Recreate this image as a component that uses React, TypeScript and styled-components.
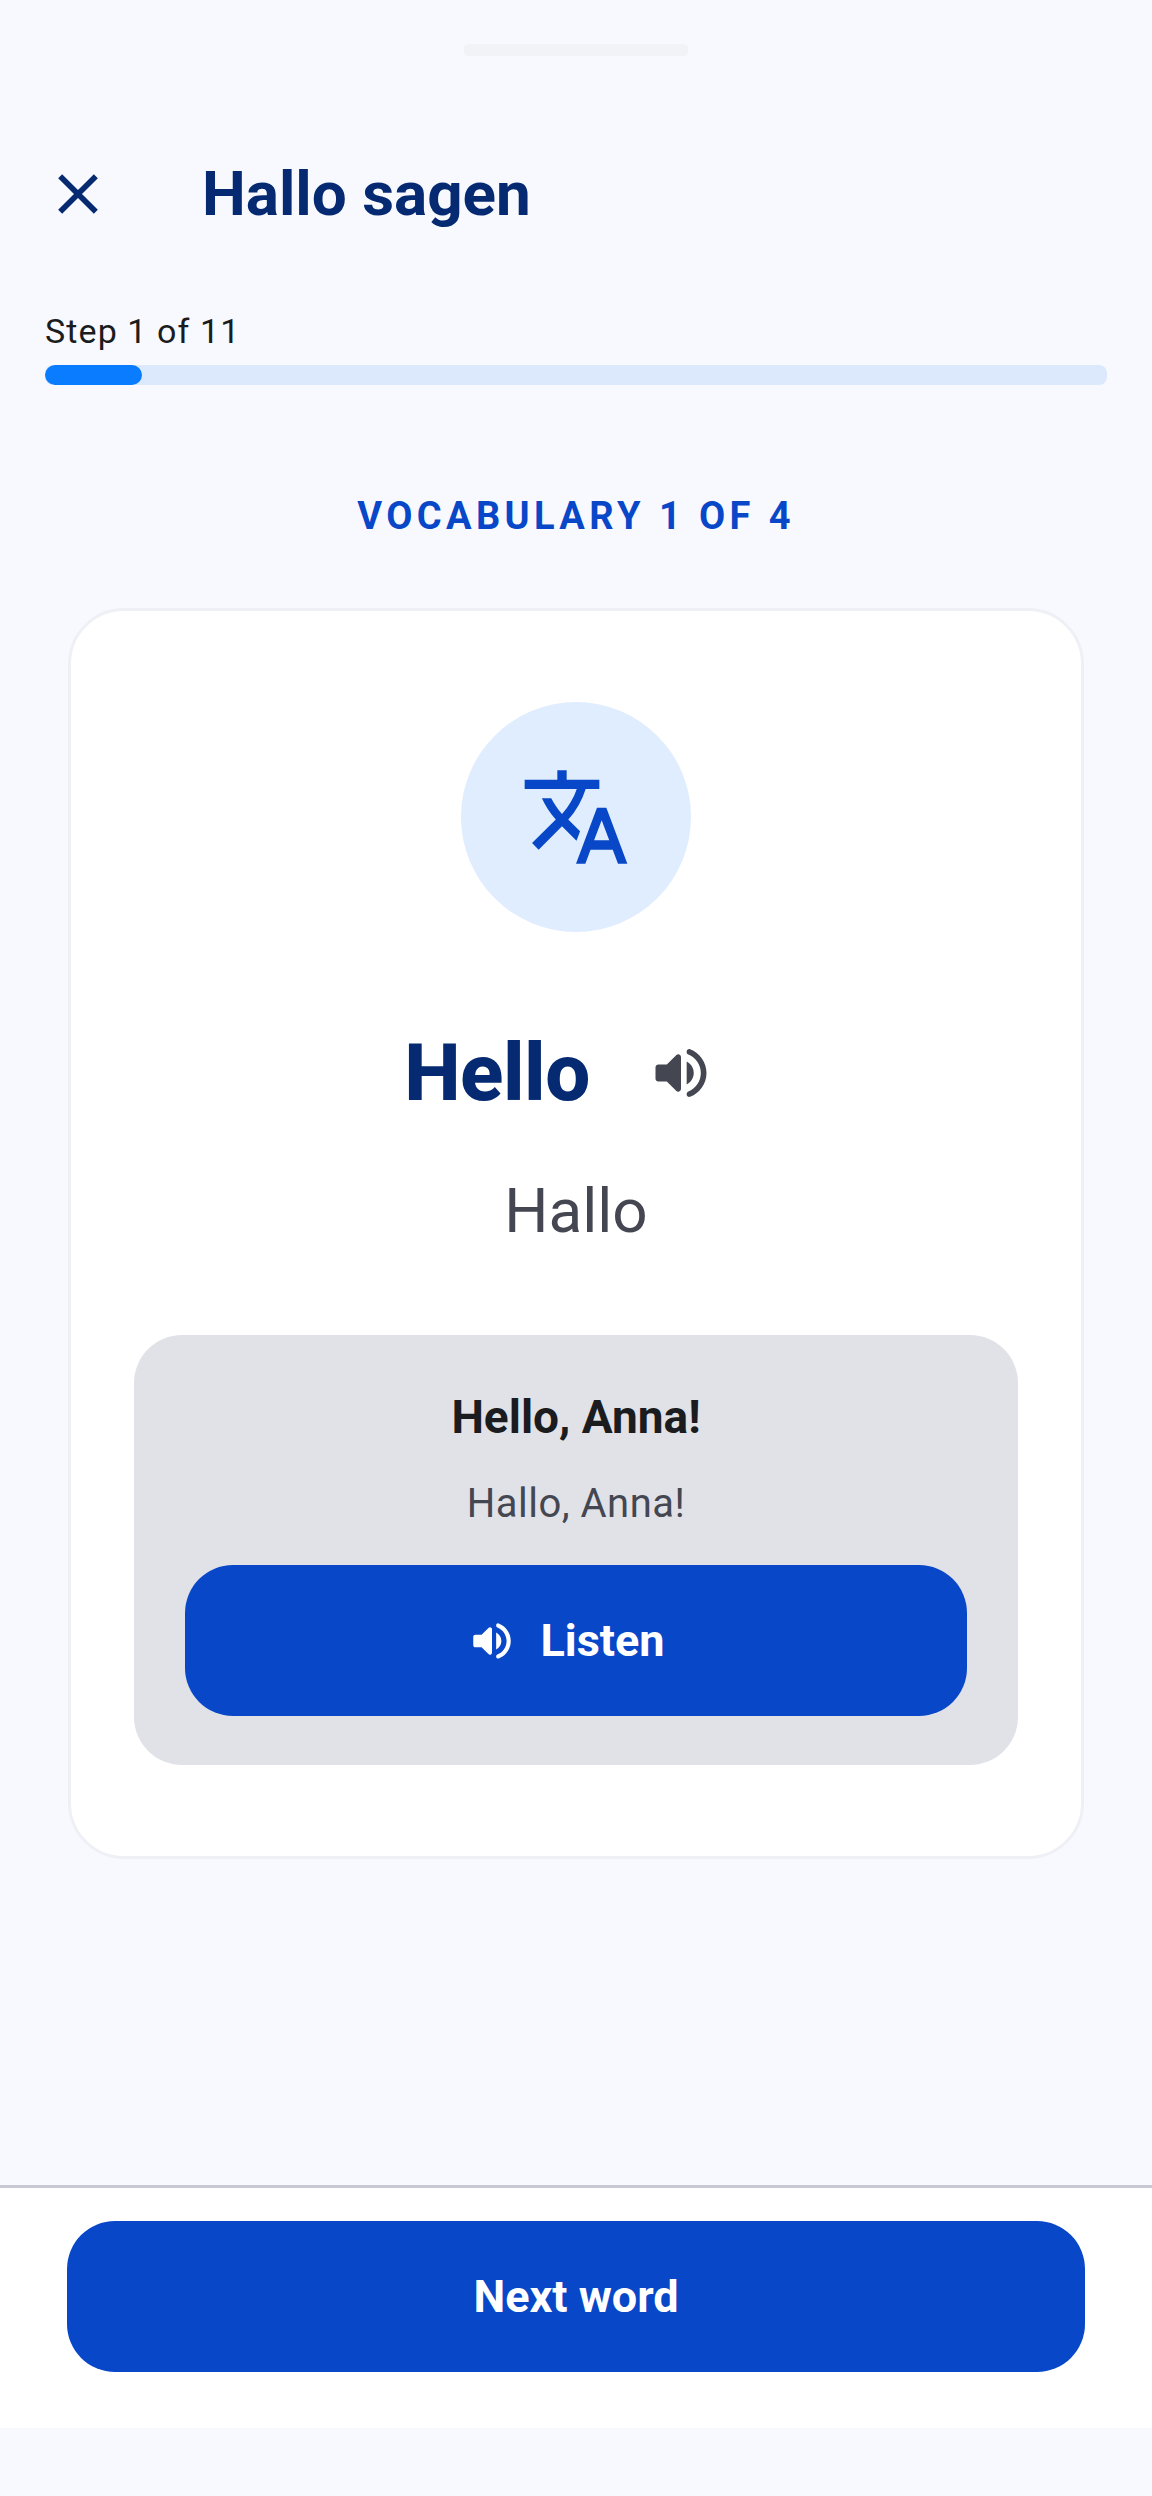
import React from "react";
import styled, { createGlobalStyle } from "styled-components";
import { MdClose, MdTranslate } from "react-icons/md";

const GlobalStyle = createGlobalStyle`
	html, body {
		margin: 0;
		padding: 0;
		background: #f8f9fe;
	}
	* {
		box-sizing: border-box;
	}
`;

const Screen = styled.div`
	width: 1152px;
	height: 2496px;
	display: flex;
	flex-direction: column;
	background: #f8f9fe;
	font-family: Roboto, "Liberation Sans", sans-serif;
	overflow: hidden;
`;

const Handle = styled.div`
	width: 224px;
	height: 12px;
	margin: 44px auto 0;
	background: #f2f3f6;
	border-radius: 4px;
`;

const Header = styled.header`
	display: flex;
	align-items: center;
	height: 96px;
	margin-top: 90px;
	padding-left: 44px;
	color: #062a72;
	svg {
		display: block;
	}
`;

const Title = styled.h1`
	margin: 0 0 0 90px;
	font-size: 62px;
	line-height: 96px;
	font-weight: 700;
	color: #062a72;
`;

const Progress = styled.section`
	margin-top: 67px;
	padding: 0 45px;
`;

const StepLabel = styled.div`
	font-size: 34px;
	line-height: 44px;
	letter-spacing: 1.1px;
	color: #1a1c20;
`;

const Track = styled.div`
	height: 20px;
	margin-top: 12px;
	background: #dce9fc;
	border-radius: 8px;
	overflow: hidden;
`;

const Fill = styled.div`
	height: 100%;
	background: #0a7cff;
	border-radius: 10px;
`;

const Eyebrow = styled.div`
	margin-top: 107px;
	text-align: center;
	font-size: 38px;
	line-height: 48px;
	font-weight: 700;
	letter-spacing: 4.4px;
	color: #0747c8;
`;

const Card = styled.main`
	width: 1016px;
	height: 1251px;
	margin: 68px auto 0;
	padding: 91px 64px 0;
	display: flex;
	flex-direction: column;
	align-items: center;
	background: #ffffff;
	border: 3px solid #eef0f6;
	border-radius: 56px;
`;

const IconCircle = styled.div`
	width: 230px;
	height: 230px;
	display: flex;
	align-items: center;
	justify-content: center;
	background: #e0edfe;
	border-radius: 50%;
	color: #0747c8;
`;

const WordRow = styled.div`
	display: flex;
	align-items: center;
	gap: 57px;
	margin-top: 91px;
	height: 100px;
	padding-right: 33px;
`;

const Word = styled.div`
	font-size: 80px;
	line-height: 100px;
	font-weight: 800;
	letter-spacing: -0.5px;
	color: #062a72;
`;

const Translation = styled.div`
	margin-top: 46px;
	font-size: 62px;
	line-height: 84px;
	color: #444751;
`;

const ExampleBox = styled.div`
	width: 884px;
	height: 430px;
	margin-top: 82px;
	padding: 50px 50px 0;
	display: flex;
	flex-direction: column;
	align-items: center;
	background: #e1e2e8;
	border-radius: 48px;
`;

const ExampleText = styled.div`
	font-size: 46px;
	line-height: 64px;
	font-weight: 700;
	color: #1a1c20;
`;

const ExampleTranslation = styled.div`
	margin-top: 24px;
	font-size: 40px;
	line-height: 62px;
	letter-spacing: 0.5px;
	color: #444751;
`;

const PrimaryButton = styled.button<{ $width: number }>`
	width: ${(p) => p.$width}px;
	height: 151px;
	display: flex;
	align-items: center;
	justify-content: center;
	flex-shrink: 0;
	padding: 0;
	border: none;
	border-radius: 48px;
	background: #0747c8;
	color: #ffffff;
	font-family: inherit;
	font-size: 45px;
	font-weight: 700;
`;

const ListenButton = styled(PrimaryButton)`
	gap: 23px;
	margin-top: 30px;
	padding-right: 20px;
`;

const BottomBar = styled.footer`
	margin-top: auto;
	margin-bottom: 68px;
	height: 243px;
	padding-top: 33px;
	background: #ffffff;
	border-top: 3px solid #c8c8d2;
	display: flex;
	justify-content: center;
`;

const VolumeIcon = ({ size, color }: { size: number; color: string }) => (
	<svg width={size} height={size} viewBox="0 0 24 24" fill={color}>
		<path d="M3 10v4c0 .55.45 1 1 1h3l3.29 3.29c.63.63 1.71.18 1.71-.71V6.41c0-.89-1.08-1.34-1.71-.71L7 9H4c-.55 0-1 .45-1 1zm13.5 2c0-1.77-1.02-3.29-2.5-4.03v8.05c1.48-.73 2.5-2.25 2.5-4.02zM14 4.45v.2c0 .38.25.71.6.85C17.18 6.53 19 9.06 19 12s-1.82 5.47-4.4 6.5c-.36.14-.6.47-.6.85v.2c0 .63.63 1.07 1.21.85C18.6 19.11 21 15.84 21 12s-2.4-7.11-5.79-8.4c-.58-.23-1.21.22-1.21.85z" />
	</svg>
);

const App = () => {
	return (
		<Screen>
			<GlobalStyle />
			<Handle />
			<Header>
				<MdClose size={68} />
				<Title>Hallo sagen</Title>
			</Header>
			<Progress>
				<StepLabel>Step 1 of 11</StepLabel>
				<Track>
					<Fill style={{ width: `${(1 / 11) * 100}%` }} />
				</Track>
			</Progress>
			<Eyebrow>VOCABULARY 1 OF 4</Eyebrow>
			<Card>
				<IconCircle>
					<MdTranslate size={112} />
				</IconCircle>
				<WordRow>
					<Word>Hello</Word>
					<VolumeIcon size={68} color="#444751" />
				</WordRow>
				<Translation>Hallo</Translation>
				<ExampleBox>
					<ExampleText>Hello, Anna!</ExampleText>
					<ExampleTranslation>Hallo, Anna!</ExampleTranslation>
					<ListenButton $width={782}>
						<VolumeIcon size={50} color="#ffffff" />
						Listen
					</ListenButton>
				</ExampleBox>
			</Card>
			<BottomBar>
				<PrimaryButton $width={1018}>Next word</PrimaryButton>
			</BottomBar>
		</Screen>
	);
};

export default App;
